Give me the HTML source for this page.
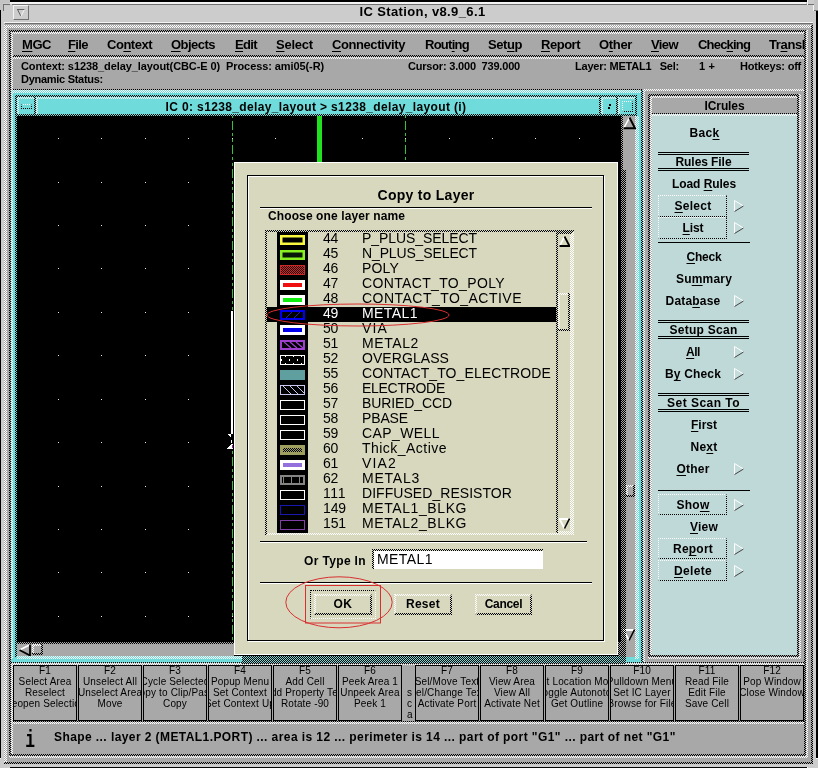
<!DOCTYPE html>
<html><head><meta charset="utf-8"><title>IC Station, v8.9_6.1</title><style>
html,body{margin:0;padding:0;background:#a8a8a8;}
#r{will-change:transform;position:relative;width:818px;height:768px;overflow:hidden;font-family:"Liberation Sans",sans-serif;}
#r>div,#r>span,#r>svg{position:absolute;}
.t{white-space:pre;display:block;}
.t u{text-decoration:underline;text-decoration-thickness:1px;text-underline-offset:2px;text-decoration-skip-ink:none;}
.dk{background:repeating-conic-gradient(#000 0 25%,transparent 0 50%) 0 0/2px 2px;}

.dk1{background:repeating-linear-gradient(90deg,#000 0 1px,transparent 1px 2px);}
.lt{background:repeating-conic-gradient(#fff 0 25%,transparent 0 50%) 0 0/2px 2px;}
.key{background:#a8a8a8;letter-spacing:0.15px;font-size:10px;line-height:11px;text-align:center;white-space:nowrap;}
.key div{display:flex;justify-content:center;}
.fk{margin-top:-1px;height:11px;}
.fl{height:11px;}
</style></head><body><div id="r">
<div style="left:0px;top:0px;width:818px;height:768px;background:#cccccc;"></div>
<div style="left:10px;top:0px;width:798px;height:2px;background:#000;"></div>
<div style="left:0px;top:10px;width:1px;height:748px;background:#000;"></div>
<div style="left:816px;top:10px;width:2px;height:748px;background:#000;"></div>
<div style="left:10px;top:767px;width:798px;height:1px;background:#000;"></div>
<div style="left:10px;top:2px;width:796px;height:2px;background:#f4f4f4;"></div>
<div style="left:12px;top:4px;width:795px;height:1px;background:#707070;"></div>
<div style="left:3px;top:4px;width:7px;height:1px;background:#707070;"></div>
<div style="left:3px;top:4px;width:1px;height:7px;background:#707070;"></div>
<div style="left:807px;top:0px;width:1px;height:5px;background:#f4f4f4;"></div>
<div style="left:808px;top:4px;width:6px;height:1px;background:#707070;"></div>
<div style="left:813px;top:5px;width:1px;height:6px;background:#f4f4f4;"></div>
<div style="left:814px;top:10px;width:4px;height:1px;background:#707070;"></div>
<div style="left:814px;top:0px;width:4px;height:10px;background:#c4c4c4;"></div>
<div style="left:0px;top:0px;width:3px;height:10px;background:#c4c4c4;"></div>
<div style="left:0px;top:0px;width:10px;height:3px;background:#c4c4c4;"></div>
<div style="left:814px;top:758px;width:4px;height:1px;background:#f4f4f4;"></div>
<div style="left:807px;top:764px;width:1px;height:4px;background:#f4f4f4;"></div>
<div style="left:0px;top:758px;width:4px;height:1px;background:#f4f4f4;"></div>
<div style="left:3px;top:758px;width:1px;height:6px;background:#707070;"></div>
<div style="left:3px;top:763px;width:7px;height:1px;background:#707070;"></div>
<div style="left:813px;top:758px;width:1px;height:6px;background:#707070;"></div>
<div style="left:808px;top:763px;width:6px;height:1px;background:#707070;"></div>
<div style="left:13px;top:5px;width:16px;height:15px;border:1px solid;border-color:#f4f4f4 #707070 #707070 #f4f4f4;box-sizing:border-box;"></div>
<svg class="a" style="left:17px;top:9px" width="8" height="8" viewBox="0 0 8 8"><path d="M0 0.5H7.5M0.5 0.5L3.8 7" stroke="#606060" fill="none"/><path d="M7.3 0.8L4 7.2" stroke="#f4f4f4"/></svg>
<span class="t" style="left:422.5px;top:5.00px;font-size:13px;line-height:13px;font-weight:bold;color:#000;letter-spacing:0.38px;transform:translateX(-50%);">IC Station, v8.9_6.1</span>
<div style="left:4px;top:22px;width:809px;height:1px;background:#f4f4f4;"></div>
<div style="left:5px;top:23px;width:808px;height:1px;background:#707070;"></div>
<div style="left:4px;top:24px;width:809px;height:740px;background:#a8a8a8;"></div>
<div class="lt" style="left:4px;top:25px;width:808px;height:3px;background-position:0px -1px;"></div>
<div class="lt" style="left:4px;top:25px;width:3px;height:737px;background-position:0px -1px;"></div>
<div class="dk" style="left:811px;top:25px;width:2px;height:739px;background-position:-1px -1px;"></div>
<div class="dk" style="left:4px;top:762px;width:809px;height:2px;background-position:0px 0px;"></div>
<div style="left:813px;top:11px;width:3px;height:756px;background:#cccccc;"></div>
<div style="left:1px;top:764px;width:815px;height:3px;background:#cccccc;"></div>
<div style="left:1px;top:11px;width:3px;height:756px;background:#cccccc;"></div>
<div class="dk" style="left:9px;top:30px;width:797px;height:2px;background-position:-1px 0px;"></div>
<div class="dk" style="left:9px;top:30px;width:2px;height:726px;background-position:-1px 0px;"></div>
<div class="lt" style="left:11px;top:32px;width:793px;height:2px;background-position:-1px 0px;"></div>
<div class="lt" style="left:11px;top:32px;width:2px;height:722px;background-position:-1px 0px;"></div>
<div class="dk" style="left:804px;top:32px;width:2px;height:724px;background-position:0px 0px;"></div>
<div class="lt" style="left:806px;top:30px;width:2px;height:728px;background-position:0px 0px;"></div>
<div class="dk" style="left:11px;top:754px;width:795px;height:2px;background-position:-1px 0px;"></div>
<div class="lt" style="left:9px;top:756px;width:799px;height:2px;background-position:-1px 0px;"></div>
<div class="dk" style="left:13px;top:55px;width:791px;height:2px;background-position:-1px -1px;"></div>
<div class="lt" style="left:13px;top:57px;width:791px;height:2px;background-position:-1px -1px;"></div>
<span class="t" style="left:22px;top:38.00px;font-size:13px;line-height:13px;font-weight:bold;color:#000;letter-spacing:-0.45px;"><u>M</u>GC</span>
<span class="t" style="left:68px;top:38.00px;font-size:13px;line-height:13px;font-weight:bold;color:#000;letter-spacing:-0.6px;"><u>F</u>ile</span>
<span class="t" style="left:107px;top:38.00px;font-size:13px;line-height:13px;font-weight:bold;color:#000;letter-spacing:-0.48px;">Co<u>n</u>text</span>
<span class="t" style="left:171px;top:38.00px;font-size:13px;line-height:13px;font-weight:bold;color:#000;letter-spacing:-0.53px;"><u>O</u>bjects</span>
<span class="t" style="left:235px;top:38.00px;font-size:13px;line-height:13px;font-weight:bold;color:#000;letter-spacing:-0.64px;"><u>E</u>dit</span>
<span class="t" style="left:276px;top:38.00px;font-size:13px;line-height:13px;font-weight:bold;color:#000;letter-spacing:-0.22px;"><u>S</u>elect</span>
<span class="t" style="left:332px;top:38.00px;font-size:13px;line-height:13px;font-weight:bold;color:#000;letter-spacing:-0.42px;"><u>C</u>onnectivity</span>
<span class="t" style="left:425px;top:38.00px;font-size:13px;line-height:13px;font-weight:bold;color:#000;letter-spacing:-0.73px;">Rout<u>i</u>ng</span>
<span class="t" style="left:488px;top:38.00px;font-size:13px;line-height:13px;font-weight:bold;color:#000;letter-spacing:-0.42px;">Set<u>u</u>p</span>
<span class="t" style="left:541px;top:38.00px;font-size:13px;line-height:13px;font-weight:bold;color:#000;letter-spacing:-0.48px;"><u>R</u>eport</span>
<span class="t" style="left:599px;top:38.00px;font-size:13px;line-height:13px;font-weight:bold;color:#000;letter-spacing:-0.33px;">O<u>t</u>her</span>
<span class="t" style="left:651px;top:38.00px;font-size:13px;line-height:13px;font-weight:bold;color:#000;letter-spacing:-0.6px;"><u>V</u>iew</span>
<span class="t" style="left:698px;top:38.00px;font-size:13px;line-height:13px;font-weight:bold;color:#000;letter-spacing:-0.81px;">Chec<u>k</u>ing</span>
<span class="t" style="left:769px;top:38.00px;font-size:13px;line-height:13px;font-weight:bold;color:#000;letter-spacing:-0.38px;">Tr<u>a</u>nsl</span>
<div class="dk" style="left:804px;top:32px;width:2px;height:724px;background-position:0px 0px;"></div>
<span class="t" style="left:21px;top:60.69px;font-size:11px;line-height:11px;font-weight:bold;color:#000;letter-spacing:-0.09px;">Context: s1238_delay_layout(CBC-E 0)  Process: ami05(-R)</span>
<span class="t" style="left:408px;top:60.69px;font-size:11px;line-height:11px;font-weight:bold;color:#000;letter-spacing:-0.19px;">Cursor: 3.000  739.000</span>
<span class="t" style="left:575px;top:60.69px;font-size:11px;line-height:11px;font-weight:bold;color:#000;letter-spacing:-0.23px;">Layer: METAL1   Sel:</span>
<span class="t" style="left:699px;top:60.69px;font-size:11px;line-height:11px;font-weight:bold;color:#000;letter-spacing:0.13px;">1 +</span>
<span class="t" style="left:740px;top:60.69px;font-size:11px;line-height:11px;font-weight:bold;color:#000;letter-spacing:-0.21px;">Hotkeys: off</span>
<span class="t" style="left:21px;top:73.69px;font-size:11px;line-height:11px;font-weight:bold;color:#000;letter-spacing:-0.28px;">Dynamic Status:</span>
<div class="dk1" style="left:13px;top:89px;width:630px;height:1px;"></div>
<div style="left:11px;top:90px;width:632px;height:573px;background:#70dbdb;"></div>
<div class="lt" style="left:11px;top:90px;width:630px;height:3px;background-position:-1px 0px;"></div>
<div class="lt" style="left:11px;top:90px;width:2px;height:569px;background-position:-1px 0px;"></div>
<div class="dk" style="left:641px;top:90px;width:2px;height:573px;background-position:-1px 0px;"></div>
<div class="dk" style="left:15px;top:95px;width:622px;height:2px;background-position:-1px -1px;"></div>
<div class="dk" style="left:15px;top:95px;width:2px;height:562px;background-position:-1px -1px;"></div>
<div class="lt" style="left:17px;top:97px;width:618px;height:2px;background-position:-1px -1px;"></div>
<div class="lt" style="left:17px;top:97px;width:2px;height:17px;background-position:-1px -1px;"></div>
<div class="dk" style="left:635px;top:97px;width:2px;height:19px;background-position:-1px -1px;"></div>
<div style="left:17px;top:116px;width:604px;height:526px;background:#000;"></div>
<div class="dk" style="left:17px;top:114px;width:620px;height:2px;background-position:-1px 0px;"></div>
<div class="dk" style="left:34px;top:97px;width:2px;height:17px;background-position:0px -1px;"></div>
<div class="lt" style="left:36px;top:99px;width:2px;height:15px;background-position:0px -1px;"></div>
<div style="left:21px;top:104px;width:11px;height:5px;border:1px dotted #000;border-top:1px dotted #fff;box-sizing:border-box;"></div>
<span class="t" style="left:316px;top:100.84px;font-size:12px;line-height:12px;font-weight:bold;color:#000;letter-spacing:0.36px;transform:translateX(-50%);">IC 0: s1238_delay_layout &gt; s1238_delay_layout (i)</span>
<div class="dk" style="left:599px;top:97px;width:2px;height:17px;background-position:-1px -1px;"></div>
<div class="lt" style="left:601px;top:99px;width:2px;height:15px;background-position:-1px -1px;"></div>
<div class="dk" style="left:616px;top:97px;width:2px;height:17px;background-position:0px -1px;"></div>
<div class="lt" style="left:618px;top:99px;width:2px;height:15px;background-position:0px -1px;"></div>
<div style="left:622px;top:101px;width:11px;height:11px;border:1px dotted #fff;border-bottom:1px dotted #000;border-right:1px dotted #000;box-sizing:border-box;"></div>
<div style="left:609px;top:104px;width:2px;height:2px;background:#000;"></div>
<div style="left:608px;top:107px;width:2px;height:2px;background:#000;"></div>
<svg class="a" style="left:17px;top:116px" width="604" height="526"><rect x="41" y="22" width="1" height="1" fill="#e8e8e8"/><rect x="41" y="66" width="1" height="1" fill="#e8e8e8"/><rect x="41" y="109" width="1" height="1" fill="#e8e8e8"/><rect x="41" y="152" width="1" height="1" fill="#e8e8e8"/><rect x="41" y="196" width="1" height="1" fill="#e8e8e8"/><rect x="41" y="239" width="1" height="1" fill="#e8e8e8"/><rect x="41" y="283" width="1" height="1" fill="#e8e8e8"/><rect x="41" y="326" width="1" height="1" fill="#e8e8e8"/><rect x="41" y="370" width="1" height="1" fill="#e8e8e8"/><rect x="41" y="413" width="1" height="1" fill="#e8e8e8"/><rect x="41" y="456" width="1" height="1" fill="#e8e8e8"/><rect x="41" y="500" width="1" height="1" fill="#e8e8e8"/><rect x="84" y="22" width="1" height="1" fill="#e8e8e8"/><rect x="84" y="66" width="1" height="1" fill="#e8e8e8"/><rect x="84" y="109" width="1" height="1" fill="#e8e8e8"/><rect x="84" y="152" width="1" height="1" fill="#e8e8e8"/><rect x="84" y="196" width="1" height="1" fill="#e8e8e8"/><rect x="84" y="239" width="1" height="1" fill="#e8e8e8"/><rect x="84" y="283" width="1" height="1" fill="#e8e8e8"/><rect x="84" y="326" width="1" height="1" fill="#e8e8e8"/><rect x="84" y="370" width="1" height="1" fill="#e8e8e8"/><rect x="84" y="413" width="1" height="1" fill="#e8e8e8"/><rect x="84" y="456" width="1" height="1" fill="#e8e8e8"/><rect x="84" y="500" width="1" height="1" fill="#e8e8e8"/><rect x="128" y="22" width="1" height="1" fill="#e8e8e8"/><rect x="128" y="66" width="1" height="1" fill="#e8e8e8"/><rect x="128" y="109" width="1" height="1" fill="#e8e8e8"/><rect x="128" y="152" width="1" height="1" fill="#e8e8e8"/><rect x="128" y="196" width="1" height="1" fill="#e8e8e8"/><rect x="128" y="239" width="1" height="1" fill="#e8e8e8"/><rect x="128" y="283" width="1" height="1" fill="#e8e8e8"/><rect x="128" y="326" width="1" height="1" fill="#e8e8e8"/><rect x="128" y="370" width="1" height="1" fill="#e8e8e8"/><rect x="128" y="413" width="1" height="1" fill="#e8e8e8"/><rect x="128" y="456" width="1" height="1" fill="#e8e8e8"/><rect x="128" y="500" width="1" height="1" fill="#e8e8e8"/><rect x="171" y="22" width="1" height="1" fill="#e8e8e8"/><rect x="171" y="66" width="1" height="1" fill="#e8e8e8"/><rect x="171" y="109" width="1" height="1" fill="#e8e8e8"/><rect x="171" y="152" width="1" height="1" fill="#e8e8e8"/><rect x="171" y="196" width="1" height="1" fill="#e8e8e8"/><rect x="171" y="239" width="1" height="1" fill="#e8e8e8"/><rect x="171" y="283" width="1" height="1" fill="#e8e8e8"/><rect x="171" y="326" width="1" height="1" fill="#e8e8e8"/><rect x="171" y="370" width="1" height="1" fill="#e8e8e8"/><rect x="171" y="413" width="1" height="1" fill="#e8e8e8"/><rect x="171" y="456" width="1" height="1" fill="#e8e8e8"/><rect x="171" y="500" width="1" height="1" fill="#e8e8e8"/><rect x="215" y="22" width="1" height="1" fill="#e8e8e8"/><rect x="215" y="66" width="1" height="1" fill="#e8e8e8"/><rect x="215" y="109" width="1" height="1" fill="#e8e8e8"/><rect x="215" y="152" width="1" height="1" fill="#e8e8e8"/><rect x="215" y="196" width="1" height="1" fill="#e8e8e8"/><rect x="215" y="239" width="1" height="1" fill="#e8e8e8"/><rect x="215" y="283" width="1" height="1" fill="#e8e8e8"/><rect x="215" y="326" width="1" height="1" fill="#e8e8e8"/><rect x="215" y="370" width="1" height="1" fill="#e8e8e8"/><rect x="215" y="413" width="1" height="1" fill="#e8e8e8"/><rect x="215" y="456" width="1" height="1" fill="#e8e8e8"/><rect x="215" y="500" width="1" height="1" fill="#e8e8e8"/><rect x="258" y="22" width="1" height="1" fill="#e8e8e8"/><rect x="258" y="66" width="1" height="1" fill="#e8e8e8"/><rect x="258" y="109" width="1" height="1" fill="#e8e8e8"/><rect x="258" y="152" width="1" height="1" fill="#e8e8e8"/><rect x="258" y="196" width="1" height="1" fill="#e8e8e8"/><rect x="258" y="239" width="1" height="1" fill="#e8e8e8"/><rect x="258" y="283" width="1" height="1" fill="#e8e8e8"/><rect x="258" y="326" width="1" height="1" fill="#e8e8e8"/><rect x="258" y="370" width="1" height="1" fill="#e8e8e8"/><rect x="258" y="413" width="1" height="1" fill="#e8e8e8"/><rect x="258" y="456" width="1" height="1" fill="#e8e8e8"/><rect x="258" y="500" width="1" height="1" fill="#e8e8e8"/><rect x="301" y="22" width="1" height="1" fill="#e8e8e8"/><rect x="301" y="66" width="1" height="1" fill="#e8e8e8"/><rect x="301" y="109" width="1" height="1" fill="#e8e8e8"/><rect x="301" y="152" width="1" height="1" fill="#e8e8e8"/><rect x="301" y="196" width="1" height="1" fill="#e8e8e8"/><rect x="301" y="239" width="1" height="1" fill="#e8e8e8"/><rect x="301" y="283" width="1" height="1" fill="#e8e8e8"/><rect x="301" y="326" width="1" height="1" fill="#e8e8e8"/><rect x="301" y="370" width="1" height="1" fill="#e8e8e8"/><rect x="301" y="413" width="1" height="1" fill="#e8e8e8"/><rect x="301" y="456" width="1" height="1" fill="#e8e8e8"/><rect x="301" y="500" width="1" height="1" fill="#e8e8e8"/><rect x="345" y="22" width="1" height="1" fill="#e8e8e8"/><rect x="345" y="66" width="1" height="1" fill="#e8e8e8"/><rect x="345" y="109" width="1" height="1" fill="#e8e8e8"/><rect x="345" y="152" width="1" height="1" fill="#e8e8e8"/><rect x="345" y="196" width="1" height="1" fill="#e8e8e8"/><rect x="345" y="239" width="1" height="1" fill="#e8e8e8"/><rect x="345" y="283" width="1" height="1" fill="#e8e8e8"/><rect x="345" y="326" width="1" height="1" fill="#e8e8e8"/><rect x="345" y="370" width="1" height="1" fill="#e8e8e8"/><rect x="345" y="413" width="1" height="1" fill="#e8e8e8"/><rect x="345" y="456" width="1" height="1" fill="#e8e8e8"/><rect x="345" y="500" width="1" height="1" fill="#e8e8e8"/><rect x="388" y="22" width="1" height="1" fill="#e8e8e8"/><rect x="388" y="66" width="1" height="1" fill="#e8e8e8"/><rect x="388" y="109" width="1" height="1" fill="#e8e8e8"/><rect x="388" y="152" width="1" height="1" fill="#e8e8e8"/><rect x="388" y="196" width="1" height="1" fill="#e8e8e8"/><rect x="388" y="239" width="1" height="1" fill="#e8e8e8"/><rect x="388" y="283" width="1" height="1" fill="#e8e8e8"/><rect x="388" y="326" width="1" height="1" fill="#e8e8e8"/><rect x="388" y="370" width="1" height="1" fill="#e8e8e8"/><rect x="388" y="413" width="1" height="1" fill="#e8e8e8"/><rect x="388" y="456" width="1" height="1" fill="#e8e8e8"/><rect x="388" y="500" width="1" height="1" fill="#e8e8e8"/><rect x="432" y="22" width="1" height="1" fill="#e8e8e8"/><rect x="432" y="66" width="1" height="1" fill="#e8e8e8"/><rect x="432" y="109" width="1" height="1" fill="#e8e8e8"/><rect x="432" y="152" width="1" height="1" fill="#e8e8e8"/><rect x="432" y="196" width="1" height="1" fill="#e8e8e8"/><rect x="432" y="239" width="1" height="1" fill="#e8e8e8"/><rect x="432" y="283" width="1" height="1" fill="#e8e8e8"/><rect x="432" y="326" width="1" height="1" fill="#e8e8e8"/><rect x="432" y="370" width="1" height="1" fill="#e8e8e8"/><rect x="432" y="413" width="1" height="1" fill="#e8e8e8"/><rect x="432" y="456" width="1" height="1" fill="#e8e8e8"/><rect x="432" y="500" width="1" height="1" fill="#e8e8e8"/><rect x="475" y="22" width="1" height="1" fill="#e8e8e8"/><rect x="475" y="66" width="1" height="1" fill="#e8e8e8"/><rect x="475" y="109" width="1" height="1" fill="#e8e8e8"/><rect x="475" y="152" width="1" height="1" fill="#e8e8e8"/><rect x="475" y="196" width="1" height="1" fill="#e8e8e8"/><rect x="475" y="239" width="1" height="1" fill="#e8e8e8"/><rect x="475" y="283" width="1" height="1" fill="#e8e8e8"/><rect x="475" y="326" width="1" height="1" fill="#e8e8e8"/><rect x="475" y="370" width="1" height="1" fill="#e8e8e8"/><rect x="475" y="413" width="1" height="1" fill="#e8e8e8"/><rect x="475" y="456" width="1" height="1" fill="#e8e8e8"/><rect x="475" y="500" width="1" height="1" fill="#e8e8e8"/><rect x="518" y="22" width="1" height="1" fill="#e8e8e8"/><rect x="518" y="66" width="1" height="1" fill="#e8e8e8"/><rect x="518" y="109" width="1" height="1" fill="#e8e8e8"/><rect x="518" y="152" width="1" height="1" fill="#e8e8e8"/><rect x="518" y="196" width="1" height="1" fill="#e8e8e8"/><rect x="518" y="239" width="1" height="1" fill="#e8e8e8"/><rect x="518" y="283" width="1" height="1" fill="#e8e8e8"/><rect x="518" y="326" width="1" height="1" fill="#e8e8e8"/><rect x="518" y="370" width="1" height="1" fill="#e8e8e8"/><rect x="518" y="413" width="1" height="1" fill="#e8e8e8"/><rect x="518" y="456" width="1" height="1" fill="#e8e8e8"/><rect x="518" y="500" width="1" height="1" fill="#e8e8e8"/><rect x="562" y="22" width="1" height="1" fill="#e8e8e8"/><rect x="562" y="66" width="1" height="1" fill="#e8e8e8"/><rect x="562" y="109" width="1" height="1" fill="#e8e8e8"/><rect x="562" y="152" width="1" height="1" fill="#e8e8e8"/><rect x="562" y="196" width="1" height="1" fill="#e8e8e8"/><rect x="562" y="239" width="1" height="1" fill="#e8e8e8"/><rect x="562" y="283" width="1" height="1" fill="#e8e8e8"/><rect x="562" y="326" width="1" height="1" fill="#e8e8e8"/><rect x="562" y="370" width="1" height="1" fill="#e8e8e8"/><rect x="562" y="413" width="1" height="1" fill="#e8e8e8"/><rect x="562" y="456" width="1" height="1" fill="#e8e8e8"/><rect x="562" y="500" width="1" height="1" fill="#e8e8e8"/><line x1="215.5" y1="0" x2="215.5" y2="526" stroke="#38c038" stroke-width="1" stroke-dasharray="9 3 3 3 3 3" stroke-dashoffset="19"/><line x1="388.5" y1="0" x2="388.5" y2="46" stroke="#38c038" stroke-width="1" stroke-dasharray="9 3 3 3 3 3" stroke-dashoffset="19"/><rect x="300" y="0" width="5" height="46" fill="#20e020"/></svg>
<div style="left:621px;top:116px;width:15px;height:541px;background:#a8a8a8;"></div>
<div class="dk" style="left:621px;top:116px;width:2px;height:541px;background-position:-1px 0px;"></div>
<div class="lt" style="left:635px;top:116px;width:4px;height:543px;background-position:-1px 0px;"></div>
<svg class="a" style="left:623px;top:117px" width="13" height="13" viewBox="0 0 13 13"><path d="M6.5 0.5L0.7 11.5" stroke="#fff" stroke-width="1.6"/><path d="M6.5 0.5L12 11.2H0.5" stroke="#000" stroke-width="1.9" fill="none"/></svg>
<svg class="a" style="left:623px;top:629px" width="12" height="12" viewBox="0 0 12 12"><path d="M11.5 1H0.5L6 11.5" stroke="#fff" stroke-width="1.8" fill="none"/><path d="M11.5 0.5L6 11.5" stroke="#000" stroke-width="1.6"/></svg>
<div class="lt" style="left:626px;top:485px;width:9px;height:2px;background-position:0px -1px;"></div>
<div class="lt" style="left:626px;top:485px;width:2px;height:12px;background-position:0px -1px;"></div>
<div class="dk" style="left:633px;top:485px;width:2px;height:12px;background-position:-1px -1px;"></div>
<div class="dk" style="left:626px;top:495px;width:9px;height:2px;background-position:0px -1px;"></div>
<div style="left:17px;top:642px;width:604px;height:14px;background:#a8a8a8;"></div>
<div class="dk" style="left:17px;top:642px;width:606px;height:2px;background-position:-1px 0px;"></div>
<div class="lt" style="left:17px;top:656px;width:225px;height:3px;background-position:-1px 0px;"></div>
<svg class="a" style="left:19px;top:644px" width="12" height="12" viewBox="0 0 12 12"><path d="M11.5 0.5L0.5 6" stroke="#fff" stroke-width="1.6"/><path d="M0.5 6L11 11.5V0.5" stroke="#000" stroke-width="1.8" fill="none"/></svg>
<div class="lt" style="left:32px;top:644px;width:11px;height:2px;background-position:0px 0px;"></div>
<div class="lt" style="left:32px;top:644px;width:2px;height:11px;background-position:0px 0px;"></div>
<div class="dk" style="left:41px;top:644px;width:2px;height:11px;background-position:-1px 0px;"></div>
<div class="dk" style="left:32px;top:653px;width:11px;height:2px;background-position:0px -1px;"></div>
<div style="left:232px;top:434px;width:1px;height:17px;background:#000;"></div>
<div style="left:231px;top:311px;width:2px;height:123px;background:#fff;"></div>
<svg class="a" style="left:226px;top:434px" width="8" height="16" viewBox="0 0 8 16" shape-rendering="crispEdges"><path d="M1 0H5V3H4V2H3V1H2Z" fill="#fff"/><rect x="5" y="6" width="1" height="3" fill="#fff"/><path d="M5 10H7V15H1V14H2V13H3V12H4V11H5Z" fill="#fff"/><rect x="6" y="11" width="1" height="3" fill="#a020a0"/></svg>
<div class="dk1" style="left:11px;top:662px;width:793px;height:1px;"></div>
<div class="lt" style="left:11px;top:663px;width:793px;height:2px;background-position:-1px -1px;"></div>
<div class="lt" style="left:643px;top:89px;width:161px;height:2px;background-position:-1px -1px;"></div>
<div class="lt" style="left:643px;top:89px;width:2px;height:573px;background-position:-1px -1px;"></div>
<div class="dk" style="left:648px;top:94px;width:151px;height:2px;background-position:0px 0px;"></div>
<div class="dk" style="left:648px;top:94px;width:2px;height:563px;background-position:0px 0px;"></div>
<div class="lt" style="left:650px;top:96px;width:147px;height:2px;background-position:0px 0px;"></div>
<div class="lt" style="left:650px;top:96px;width:2px;height:559px;background-position:0px 0px;"></div>
<div style="left:652px;top:98px;width:145px;height:15px;background:#a8a8a8;"></div>
<div style="left:652px;top:116px;width:145px;height:539px;background:#bfd8d8;"></div>
<div class="dk1" style="left:652px;top:113px;width:145px;height:1px;"></div>
<div style="left:652px;top:114px;width:145px;height:2px;background:#bfd8d8;"></div>
<div class="lt" style="left:652px;top:114px;width:145px;height:2px;background-position:0px 0px;"></div>
<div class="dk" style="left:797px;top:96px;width:2px;height:561px;background-position:-1px 0px;"></div>
<div class="lt" style="left:799px;top:94px;width:2px;height:565px;background-position:-1px 0px;"></div>
<div class="dk" style="left:650px;top:655px;width:147px;height:2px;background-position:0px -1px;"></div>
<div class="lt" style="left:648px;top:657px;width:151px;height:2px;background-position:0px -1px;"></div>
<span class="t" style="left:724.5px;top:99.84px;font-size:12px;line-height:12px;font-weight:bold;color:#000;letter-spacing:-0.1px;transform:translateX(-50%);">ICrules</span>
<span class="t" style="left:704.5px;top:126.84px;font-size:12px;line-height:12px;font-weight:bold;color:#000;letter-spacing:0.33px;transform:translateX(-50%);">Bac<u>k</u></span>
<div style="left:658px;top:152px;width:91px;height:1px;background:#000;"></div>
<div style="left:658px;top:154px;width:91px;height:1px;background:#000;"></div>
<span class="t" style="left:703.5px;top:155.84px;font-size:12px;line-height:12px;font-weight:bold;color:#000;letter-spacing:-0.07px;transform:translateX(-50%);">Rules File</span>
<div style="left:658px;top:168px;width:91px;height:1px;background:#000;"></div>
<div style="left:658px;top:170px;width:91px;height:1px;background:#000;"></div>
<span class="t" style="left:704px;top:177.84px;font-size:12px;line-height:12px;font-weight:bold;color:#000;letter-spacing:-0.07px;transform:translateX(-50%);">Load <u>R</u>ules</span>
<div style="left:658px;top:195px;width:69px;height:22px;border:1px dotted #fff;border-right:1px dotted #000;border-bottom:1px dotted #000;box-sizing:border-box;"></div>
<span class="t" style="left:693px;top:199.84px;font-size:12px;line-height:12px;font-weight:bold;color:#000;letter-spacing:0.27px;transform:translateX(-50%);"><u>S</u>elect</span>
<svg class="a" style="left:734px;top:200px" width="11" height="12" viewBox="0 0 11 12"><path d="M0.5 0.5L9.5 6L0.5 11.5Z" fill="#c4dcdc"/><path d="M0.5 11.5V0.5L9.5 6" stroke="#fff" fill="none"/><path d="M9.5 6L0.5 11.5" stroke="#404040" fill="none"/></svg>
<div style="left:658px;top:217px;width:69px;height:22px;border:1px dotted #fff;border-right:1px dotted #000;border-bottom:1px dotted #000;box-sizing:border-box;"></div>
<span class="t" style="left:693px;top:221.84px;font-size:12px;line-height:12px;font-weight:bold;color:#000;letter-spacing:-0.09px;transform:translateX(-50%);"><u>L</u>ist</span>
<svg class="a" style="left:734px;top:222px" width="11" height="12" viewBox="0 0 11 12"><path d="M0.5 0.5L9.5 6L0.5 11.5Z" fill="#c4dcdc"/><path d="M0.5 11.5V0.5L9.5 6" stroke="#fff" fill="none"/><path d="M9.5 6L0.5 11.5" stroke="#404040" fill="none"/></svg>
<div style="left:658px;top:242px;width:92px;height:1px;background:#000;"></div>
<span class="t" style="left:704px;top:250.84px;font-size:12px;line-height:12px;font-weight:bold;color:#000;letter-spacing:-0.21px;transform:translateX(-50%);"><u>C</u>heck</span>
<span class="t" style="left:704px;top:272.84px;font-size:12px;line-height:12px;font-weight:bold;color:#000;letter-spacing:0.19px;transform:translateX(-50%);">Su<u>m</u>mary</span>
<span class="t" style="left:693px;top:294.84px;font-size:12px;line-height:12px;font-weight:bold;color:#000;letter-spacing:0.2px;transform:translateX(-50%);">Data<u>b</u>ase</span>
<svg class="a" style="left:734px;top:295px" width="11" height="12" viewBox="0 0 11 12"><path d="M0.5 0.5L9.5 6L0.5 11.5Z" fill="#c4dcdc"/><path d="M0.5 11.5V0.5L9.5 6" stroke="#fff" fill="none"/><path d="M9.5 6L0.5 11.5" stroke="#404040" fill="none"/></svg>
<div style="left:658px;top:320px;width:91px;height:1px;background:#000;"></div>
<div style="left:658px;top:322px;width:91px;height:1px;background:#000;"></div>
<span class="t" style="left:703.5px;top:323.84px;font-size:12px;line-height:12px;font-weight:bold;color:#000;letter-spacing:0.26px;transform:translateX(-50%);">Setup Scan</span>
<div style="left:658px;top:336px;width:91px;height:1px;background:#000;"></div>
<div style="left:658px;top:338px;width:91px;height:1px;background:#000;"></div>
<span class="t" style="left:693px;top:345.84px;font-size:12px;line-height:12px;font-weight:bold;color:#000;letter-spacing:-0.45px;transform:translateX(-50%);"><u>A</u>ll</span>
<svg class="a" style="left:734px;top:346px" width="11" height="12" viewBox="0 0 11 12"><path d="M0.5 0.5L9.5 6L0.5 11.5Z" fill="#c4dcdc"/><path d="M0.5 11.5V0.5L9.5 6" stroke="#fff" fill="none"/><path d="M9.5 6L0.5 11.5" stroke="#404040" fill="none"/></svg>
<span class="t" style="left:693px;top:367.84px;font-size:12px;line-height:12px;font-weight:bold;color:#000;letter-spacing:0.16px;transform:translateX(-50%);">B<u>y</u> Check</span>
<svg class="a" style="left:734px;top:368px" width="11" height="12" viewBox="0 0 11 12"><path d="M0.5 0.5L9.5 6L0.5 11.5Z" fill="#c4dcdc"/><path d="M0.5 11.5V0.5L9.5 6" stroke="#fff" fill="none"/><path d="M9.5 6L0.5 11.5" stroke="#404040" fill="none"/></svg>
<div style="left:658px;top:393px;width:91px;height:1px;background:#000;"></div>
<div style="left:658px;top:395px;width:91px;height:1px;background:#000;"></div>
<span class="t" style="left:703.5px;top:396.84px;font-size:12px;line-height:12px;font-weight:bold;color:#000;letter-spacing:0.47px;transform:translateX(-50%);">Set Scan To</span>
<div style="left:658px;top:409px;width:91px;height:1px;background:#000;"></div>
<div style="left:658px;top:411px;width:91px;height:1px;background:#000;"></div>
<span class="t" style="left:704px;top:418.84px;font-size:12px;line-height:12px;font-weight:bold;color:#000;transform:translateX(-50%);"><u>F</u>irst</span>
<span class="t" style="left:704px;top:440.84px;font-size:12px;line-height:12px;font-weight:bold;color:#000;letter-spacing:0.25px;transform:translateX(-50%);">Ne<u>x</u>t</span>
<span class="t" style="left:693px;top:462.84px;font-size:12px;line-height:12px;font-weight:bold;color:#000;letter-spacing:0.2px;transform:translateX(-50%);"><u>O</u>ther</span>
<svg class="a" style="left:734px;top:463px" width="11" height="12" viewBox="0 0 11 12"><path d="M0.5 0.5L9.5 6L0.5 11.5Z" fill="#c4dcdc"/><path d="M0.5 11.5V0.5L9.5 6" stroke="#fff" fill="none"/><path d="M9.5 6L0.5 11.5" stroke="#404040" fill="none"/></svg>
<div style="left:658px;top:490px;width:92px;height:1px;background:#000;"></div>
<div style="left:658px;top:494px;width:69px;height:21px;border:1px dotted #fff;border-right:1px dotted #000;border-bottom:1px dotted #000;box-sizing:border-box;"></div>
<span class="t" style="left:693px;top:498.84px;font-size:12px;line-height:12px;font-weight:bold;color:#000;letter-spacing:0.25px;transform:translateX(-50%);">Sho<u>w</u></span>
<svg class="a" style="left:734px;top:499px" width="11" height="12" viewBox="0 0 11 12"><path d="M0.5 0.5L9.5 6L0.5 11.5Z" fill="#c4dcdc"/><path d="M0.5 11.5V0.5L9.5 6" stroke="#fff" fill="none"/><path d="M9.5 6L0.5 11.5" stroke="#404040" fill="none"/></svg>
<span class="t" style="left:704px;top:520.84px;font-size:12px;line-height:12px;font-weight:bold;color:#000;letter-spacing:0.21px;transform:translateX(-50%);"><u>V</u>iew</span>
<div style="left:658px;top:538px;width:69px;height:21px;border:1px dotted #fff;border-right:1px dotted #000;border-bottom:1px dotted #000;box-sizing:border-box;"></div>
<span class="t" style="left:693px;top:542.84px;font-size:12px;line-height:12px;font-weight:bold;color:#000;letter-spacing:0.22px;transform:translateX(-50%);">Re<u>p</u>ort</span>
<svg class="a" style="left:734px;top:543px" width="11" height="12" viewBox="0 0 11 12"><path d="M0.5 0.5L9.5 6L0.5 11.5Z" fill="#c4dcdc"/><path d="M0.5 11.5V0.5L9.5 6" stroke="#fff" fill="none"/><path d="M9.5 6L0.5 11.5" stroke="#404040" fill="none"/></svg>
<div style="left:658px;top:560px;width:69px;height:21px;border:1px dotted #fff;border-right:1px dotted #000;border-bottom:1px dotted #000;box-sizing:border-box;"></div>
<span class="t" style="left:693px;top:564.84px;font-size:12px;line-height:12px;font-weight:bold;color:#000;letter-spacing:0.33px;transform:translateX(-50%);"><u>D</u>elete</span>
<svg class="a" style="left:734px;top:565px" width="11" height="12" viewBox="0 0 11 12"><path d="M0.5 0.5L9.5 6L0.5 11.5Z" fill="#c4dcdc"/><path d="M0.5 11.5V0.5L9.5 6" stroke="#fff" fill="none"/><path d="M9.5 6L0.5 11.5" stroke="#404040" fill="none"/></svg>
<div class="key" style="left:13px;top:665px;width:64px;height:56px;border:1px solid #000;box-sizing:border-box;overflow:hidden;"><div class="fk">F1</div><div class="fl">Select Area</div><div class="fl">Reselect</div><div class="fl">Reopen Selection</div></div>
<div class="key" style="left:78px;top:665px;width:64px;height:56px;border:1px solid #000;box-sizing:border-box;overflow:hidden;"><div class="fk">F2</div><div class="fl">Unselect All</div><div class="fl">Unselect Area</div><div class="fl">Move</div></div>
<div class="key" style="left:143px;top:665px;width:64px;height:56px;border:1px solid #000;box-sizing:border-box;overflow:hidden;"><div class="fk">F3</div><div class="fl">Cycle Selected</div><div class="fl">Copy to Clip/Paste</div><div class="fl">Copy</div></div>
<div class="key" style="left:208px;top:665px;width:64px;height:56px;border:1px solid #000;box-sizing:border-box;overflow:hidden;"><div class="fk">F4</div><div class="fl">Popup Menu</div><div class="fl">Set Context</div><div class="fl">Set Context Up</div></div>
<div class="key" style="left:273px;top:665px;width:64px;height:56px;border:1px solid #000;box-sizing:border-box;overflow:hidden;"><div class="fk">F5</div><div class="fl">Add Cell</div><div class="fl">Add Property Text</div><div class="fl">Rotate -90</div></div>
<div class="key" style="left:338px;top:665px;width:64px;height:56px;border:1px solid #000;box-sizing:border-box;overflow:hidden;"><div class="fk">F6</div><div class="fl">Peek Area 1</div><div class="fl">Unpeek Area</div><div class="fl">Peek 1</div></div>
<div class="key" style="left:415px;top:665px;width:64px;height:56px;border:1px solid #000;box-sizing:border-box;overflow:hidden;"><div class="fk">F7</div><div class="fl">Sel/Move Text</div><div class="fl">Sel/Change Text</div><div class="fl">Activate Port</div></div>
<div class="key" style="left:480px;top:665px;width:64px;height:56px;border:1px solid #000;box-sizing:border-box;overflow:hidden;"><div class="fk">F8</div><div class="fl">View Area</div><div class="fl">View All</div><div class="fl">Activate Net</div></div>
<div class="key" style="left:545px;top:665px;width:64px;height:56px;border:1px solid #000;box-sizing:border-box;overflow:hidden;"><div class="fk">F9</div><div class="fl">Set Location Mode</div><div class="fl">Toggle Autonotch</div><div class="fl">Get Outline</div></div>
<div class="key" style="left:610px;top:665px;width:64px;height:56px;border:1px solid #000;box-sizing:border-box;overflow:hidden;"><div class="fk">F10</div><div class="fl">Pulldown Menu</div><div class="fl">Set IC Layer</div><div class="fl">Browse for File</div></div>
<div class="key" style="left:675px;top:665px;width:64px;height:56px;border:1px solid #000;box-sizing:border-box;overflow:hidden;"><div class="fk">F11</div><div class="fl">Read File</div><div class="fl">Edit File</div><div class="fl">Save Cell</div></div>
<div class="key" style="left:740px;top:665px;width:64px;height:56px;border:1px solid #000;box-sizing:border-box;overflow:hidden;"><div class="fk">F12</div><div class="fl">Pop Window</div><div class="fl">Close Window</div><div class="fl"></div></div>
<span class="t" style="left:407px;top:687.53px;font-size:10px;line-height:10px;font-weight:normal;color:#000;">s</span>
<span class="t" style="left:407px;top:698.53px;font-size:10px;line-height:10px;font-weight:normal;color:#000;">c</span>
<span class="t" style="left:407px;top:709.53px;font-size:10px;line-height:10px;font-weight:normal;color:#000;">a</span>
<div class="dk1" style="left:13px;top:721px;width:791px;height:1px;"></div>
<div class="lt" style="left:13px;top:722px;width:791px;height:2px;background-position:-1px 0px;"></div>
<span class="t" style="left:22.5px;top:729.18px;font-size:24px;line-height:24px;font-weight:bold;color:#000;font-family:'Liberation Mono',monospace;transform:scaleX(0.68);transform-origin:50% 50%;">i</span>
<span class="t" style="left:54px;top:730.84px;font-size:12px;line-height:12px;font-weight:bold;color:#000;letter-spacing:0.42px;">Shape ... layer 2 (METAL1.PORT) ... area is 12 ... perimeter is 14 ... part of port "G1" ... part of net "G1"</span>
<div class="dk" style="left:242px;top:656px;width:384px;height:8px;background-position:0px 0px;"></div>
<div class="dk" style="left:618px;top:170px;width:8px;height:486px;background-position:0px 0px;"></div>
<div style="left:234px;top:655px;width:384px;height:1px;background:#000;"></div>
<div style="left:234px;top:162px;width:384px;height:493px;background:#fff;"></div>
<div style="left:235px;top:163px;width:382px;height:491px;background:#d8d8bf;"></div>
<div style="left:248px;top:176px;width:357px;height:466px;border:1px solid #fff;box-sizing:border-box;"></div>
<div style="left:247px;top:175px;width:357px;height:466px;border:1px solid #000;box-sizing:border-box;"></div>
<span class="t" style="left:426px;top:188.15px;font-size:14px;line-height:14px;font-weight:bold;color:#000;letter-spacing:0.28px;transform:translateX(-50%);">Copy to Layer</span>
<div style="left:260px;top:207px;width:332px;height:1px;background:#000;"></div>
<div style="left:260px;top:208px;width:332px;height:1px;background:#fff;"></div>
<span class="t" style="left:268px;top:209.84px;font-size:12px;line-height:12px;font-weight:bold;color:#000;letter-spacing:0.11px;">Choose one layer name</span>
<div class="dk" style="left:265px;top:230px;width:309px;height:2px;background-position:-1px 0px;"></div>
<div class="dk" style="left:265px;top:230px;width:2px;height:305px;background-position:-1px 0px;"></div>
<div class="lt" style="left:267px;top:533px;width:307px;height:2px;background-position:-1px -1px;"></div>
<div class="lt" style="left:572px;top:232px;width:2px;height:303px;background-position:0px 0px;"></div>
<div style="left:277px;top:232px;width:31px;height:301px;background:#000;"></div>
<div style="left:267px;top:307px;width:289px;height:15px;background:#000;"></div>
<span class="t" style="left:323px;top:231.15px;font-size:14px;line-height:14px;font-weight:normal;color:#000;letter-spacing:-0.29px;">44</span>
<span class="t" style="left:362px;top:231.15px;font-size:14px;line-height:14px;font-weight:normal;color:#000;letter-spacing:-0.07px;">P_PLUS_SELECT</span>
<span class="t" style="left:323px;top:246.15px;font-size:14px;line-height:14px;font-weight:normal;color:#000;letter-spacing:-0.29px;">45</span>
<span class="t" style="left:362px;top:246.15px;font-size:14px;line-height:14px;font-weight:normal;color:#000;letter-spacing:-0.13px;">N_PLUS_SELECT</span>
<span class="t" style="left:323px;top:261.15px;font-size:14px;line-height:14px;font-weight:normal;color:#000;letter-spacing:-0.29px;">46</span>
<span class="t" style="left:362px;top:261.15px;font-size:14px;line-height:14px;font-weight:normal;color:#000;letter-spacing:0.17px;">POLY</span>
<span class="t" style="left:323px;top:276.15px;font-size:14px;line-height:14px;font-weight:normal;color:#000;letter-spacing:-0.29px;">47</span>
<span class="t" style="left:362px;top:276.15px;font-size:14px;line-height:14px;font-weight:normal;color:#000;letter-spacing:0.35px;">CONTACT_TO_POLY</span>
<span class="t" style="left:323px;top:291.15px;font-size:14px;line-height:14px;font-weight:normal;color:#000;letter-spacing:-0.29px;">48</span>
<span class="t" style="left:362px;top:291.15px;font-size:14px;line-height:14px;font-weight:normal;color:#000;letter-spacing:0.47px;">CONTACT_TO_ACTIVE</span>
<span class="t" style="left:323px;top:306.15px;font-size:14px;line-height:14px;font-weight:normal;color:#fff;letter-spacing:-0.29px;">49</span>
<span class="t" style="left:362px;top:306.15px;font-size:14px;line-height:14px;font-weight:normal;color:#fff;letter-spacing:0.43px;">METAL1</span>
<span class="t" style="left:323px;top:321.15px;font-size:14px;line-height:14px;font-weight:normal;color:#000;letter-spacing:-0.29px;">50</span>
<span class="t" style="left:362px;top:321.15px;font-size:14px;line-height:14px;font-weight:normal;color:#000;letter-spacing:1.14px;">VIA</span>
<span class="t" style="left:323px;top:336.15px;font-size:14px;line-height:14px;font-weight:normal;color:#000;letter-spacing:-0.29px;">51</span>
<span class="t" style="left:362px;top:336.15px;font-size:14px;line-height:14px;font-weight:normal;color:#000;letter-spacing:0.59px;">METAL2</span>
<span class="t" style="left:323px;top:351.15px;font-size:14px;line-height:14px;font-weight:normal;color:#000;letter-spacing:-0.29px;">52</span>
<span class="t" style="left:362px;top:351.15px;font-size:14px;line-height:14px;font-weight:normal;color:#000;letter-spacing:0.07px;">OVERGLASS</span>
<span class="t" style="left:323px;top:366.15px;font-size:14px;line-height:14px;font-weight:normal;color:#000;letter-spacing:-0.29px;">55</span>
<span class="t" style="left:362px;top:366.15px;font-size:14px;line-height:14px;font-weight:normal;color:#000;letter-spacing:0.1px;">CONTACT_TO_ELECTRODE</span>
<span class="t" style="left:323px;top:381.15px;font-size:14px;line-height:14px;font-weight:normal;color:#000;letter-spacing:-0.29px;">56</span>
<span class="t" style="left:362px;top:381.15px;font-size:14px;line-height:14px;font-weight:normal;color:#000;letter-spacing:-0.29px;">ELECTRODE</span>
<span class="t" style="left:323px;top:396.15px;font-size:14px;line-height:14px;font-weight:normal;color:#000;letter-spacing:-0.29px;">57</span>
<span class="t" style="left:362px;top:396.15px;font-size:14px;line-height:14px;font-weight:normal;color:#000;letter-spacing:-0.1px;">BURIED_CCD</span>
<span class="t" style="left:323px;top:411.15px;font-size:14px;line-height:14px;font-weight:normal;color:#000;letter-spacing:-0.29px;">58</span>
<span class="t" style="left:362px;top:411.15px;font-size:14px;line-height:14px;font-weight:normal;color:#000;letter-spacing:-0.14px;">PBASE</span>
<span class="t" style="left:323px;top:426.15px;font-size:14px;line-height:14px;font-weight:normal;color:#000;letter-spacing:-0.29px;">59</span>
<span class="t" style="left:362px;top:426.15px;font-size:14px;line-height:14px;font-weight:normal;color:#000;letter-spacing:0.41px;">CAP_WELL</span>
<span class="t" style="left:323px;top:441.15px;font-size:14px;line-height:14px;font-weight:normal;color:#000;letter-spacing:-0.29px;">60</span>
<span class="t" style="left:362px;top:441.15px;font-size:14px;line-height:14px;font-weight:normal;color:#000;letter-spacing:0.47px;">Thick_Active</span>
<span class="t" style="left:323px;top:456.15px;font-size:14px;line-height:14px;font-weight:normal;color:#000;letter-spacing:-0.29px;">61</span>
<span class="t" style="left:362px;top:456.15px;font-size:14px;line-height:14px;font-weight:normal;color:#000;letter-spacing:1.16px;">VIA2</span>
<span class="t" style="left:323px;top:471.15px;font-size:14px;line-height:14px;font-weight:normal;color:#000;letter-spacing:-0.29px;">62</span>
<span class="t" style="left:362px;top:471.15px;font-size:14px;line-height:14px;font-weight:normal;color:#000;letter-spacing:0.76px;">METAL3</span>
<span class="t" style="left:323px;top:486.15px;font-size:14px;line-height:14px;font-weight:normal;color:#000;letter-spacing:0.57px;">111</span>
<span class="t" style="left:362px;top:486.15px;font-size:14px;line-height:14px;font-weight:normal;color:#000;letter-spacing:0.05px;">DIFFUSED_RESISTOR</span>
<span class="t" style="left:323px;top:501.15px;font-size:14px;line-height:14px;font-weight:normal;color:#000;letter-spacing:-0.12px;">149</span>
<span class="t" style="left:362px;top:501.15px;font-size:14px;line-height:14px;font-weight:normal;color:#000;letter-spacing:0.59px;">METAL1_BLKG</span>
<span class="t" style="left:323px;top:516.15px;font-size:14px;line-height:14px;font-weight:normal;color:#000;letter-spacing:-0.12px;">151</span>
<span class="t" style="left:362px;top:516.15px;font-size:14px;line-height:14px;font-weight:normal;color:#000;letter-spacing:0.59px;">METAL2_BLKG</span>
<svg class="a" style="left:0;top:0" width="818" height="768"><defs><pattern id="dt" width="2" height="2" patternUnits="userSpaceOnUse"><rect width="1" height="1" fill="#200000"/><rect x="1" y="1" width="1" height="1" fill="#200000"/></pattern><pattern id="dk2" width="2" height="2" patternUnits="userSpaceOnUse"><rect width="1" height="1" fill="#000"/><rect x="1" y="1" width="1" height="1" fill="#000"/></pattern></defs><rect x="281.25" y="236.25" width="22.5" height="7.5" fill="#000" stroke="#f8f840" stroke-width="2.5"/><rect x="281.25" y="251.25" width="22.5" height="7.5" fill="#081808" stroke="#88f020" stroke-width="2.5"/><rect x="280" y="265" width="25" height="10" fill="#cc2828"/><rect x="281" y="266" width="23" height="8" fill="url(#dt)"/><rect x="280" y="280" width="25" height="10" fill="#fff"/><rect x="283" y="283" width="19" height="4" fill="#ee1010"/><rect x="280" y="295" width="25" height="10" fill="#fff"/><rect x="283" y="298" width="19" height="4" fill="#10ee10"/><rect x="281" y="311" width="23" height="8" fill="#000" stroke="#0000ee" stroke-width="2"/><path d="M286 318l6 -6M294 318l6 -6" stroke="#2020c0" stroke-width="1"/><rect x="280" y="325" width="25" height="10" fill="#fff"/><rect x="283" y="328" width="19" height="4" fill="#0000ee"/><rect x="281" y="341" width="23" height="8" fill="#000" stroke="#a040d0" stroke-width="2"/><path d="M284 342l7 6M290 342l7 6M296 342l7 6" stroke="#a040d0" stroke-width="1.2"/><rect x="280.5" y="355.5" width="24" height="9" fill="#000" stroke="#fff" stroke-width="1"/><rect x="285" y="356" width="1" height="1" fill="#fff"/><rect x="293" y="356" width="1" height="1" fill="#fff"/><rect x="301" y="356" width="1" height="1" fill="#fff"/><rect x="285" y="363" width="1" height="1" fill="#fff"/><rect x="293" y="363" width="1" height="1" fill="#fff"/><rect x="301" y="363" width="1" height="1" fill="#fff"/><rect x="281" y="359" width="1" height="2" fill="#fff"/><rect x="289" y="359" width="1" height="2" fill="#fff"/><rect x="297" y="359" width="1" height="2" fill="#fff"/><rect x="280" y="370" width="25" height="10" fill="#5f9f9f"/><rect x="280.5" y="385.5" width="24" height="9" fill="#000" stroke="#c8c8f0" stroke-width="1"/><path d="M283 386l8 8M290 386l8 8M297 386l7 7" stroke="#c8c8f0" stroke-width="1"/><rect x="280.5" y="400.5" width="24" height="9" fill="#000" stroke="#fff" stroke-width="1"/><rect x="280.5" y="415.5" width="24" height="9" fill="#000" stroke="#fff" stroke-width="1"/><rect x="280.5" y="430.5" width="24" height="9" fill="#000" stroke="#fff" stroke-width="1"/><rect x="280" y="445" width="25" height="10" fill="#9f9f5f"/><rect x="283" y="448" width="19" height="4" fill="url(#dk2)"/><rect x="280" y="460" width="25" height="10" fill="#fff"/><rect x="283" y="463" width="19" height="4" fill="#9370db"/><rect x="281" y="476" width="23" height="8" fill="#000" stroke="#848484" stroke-width="2"/><path d="M283.5 477v6M291.5 477v6M299.5 477v6" stroke="#848484" stroke-width="1"/><rect x="280.5" y="490.5" width="24" height="9" fill="#000" stroke="#fff" stroke-width="1"/><rect x="280.5" y="505.5" width="24" height="9" fill="#000" stroke="#1818b0" stroke-width="1"/><rect x="280.5" y="520.5" width="24" height="9" fill="#000" stroke="#8040a8" stroke-width="1"/></svg>
<div class="dk" style="left:556px;top:232px;width:2px;height:301px;background-position:0px 0px;"></div>
<div class="dk" style="left:556px;top:232px;width:16px;height:2px;background-position:0px 0px;"></div>
<div class="lt" style="left:570px;top:234px;width:2px;height:299px;background-position:0px 0px;"></div>
<div class="lt" style="left:558px;top:531px;width:14px;height:2px;background-position:0px -1px;"></div>
<svg class="a" style="left:559px;top:236px" width="11" height="11" viewBox="0 0 11 11"><path d="M5.5 0.5L0.5 10.5" stroke="#fff" stroke-width="1.6"/><path d="M5.5 0.5L10.5 10H0.5" stroke="#000" stroke-width="1.8" fill="none"/></svg>
<svg class="a" style="left:559px;top:518px" width="11" height="11" viewBox="0 0 11 11"><path d="M10.5 1H0.5L5.5 10.5" stroke="#fff" stroke-width="1.8" fill="none"/><path d="M10.5 0.5L5.5 10.5" stroke="#000" stroke-width="1.6"/></svg>
<div class="lt" style="left:558px;top:293px;width:12px;height:2px;background-position:0px -1px;"></div>
<div class="lt" style="left:558px;top:293px;width:2px;height:38px;background-position:0px -1px;"></div>
<div class="dk" style="left:568px;top:293px;width:2px;height:38px;background-position:0px -1px;"></div>
<div class="dk" style="left:558px;top:329px;width:12px;height:2px;background-position:0px -1px;"></div>
<div style="left:260px;top:541px;width:327px;height:1px;background:#000;"></div>
<div style="left:260px;top:542px;width:327px;height:1px;background:#fff;"></div>
<span class="t" style="left:304px;top:554.84px;font-size:12px;line-height:12px;font-weight:bold;color:#000;letter-spacing:0.35px;">Or Type In</span>
<div style="left:372px;top:549px;width:171px;height:20px;background:#fff;"></div>
<div style="left:372px;top:549px;width:171px;height:2px;background:#d8d8bf;"></div>
<div style="left:372px;top:549px;width:2px;height:20px;background:#d8d8bf;"></div>
<div class="dk" style="left:372px;top:549px;width:171px;height:2px;background-position:0px -1px;"></div>
<div class="dk" style="left:372px;top:549px;width:2px;height:20px;background-position:0px -1px;"></div>
<span class="t" style="left:377px;top:552.15px;font-size:14px;line-height:14px;font-weight:normal;color:#000;letter-spacing:0.43px;">METAL1</span>
<div style="left:260px;top:582px;width:332px;height:1px;background:#000;"></div>
<div style="left:260px;top:583px;width:332px;height:1px;background:#fff;"></div>
<div style="left:310px;top:590px;width:66px;height:29px;border:1px dotted;border-color:#000 #fff #fff #000;box-sizing:border-box;"></div>
<div style="left:314px;top:594px;width:58px;height:21px;border:1px dotted;border-color:#fff #000 #000 #fff;box-sizing:border-box;"></div>
<div style="left:315px;top:595px;width:56px;height:19px;border:1px dotted;border-color:#fff #000 #000 #fff;box-sizing:border-box;"></div>
<span class="t" style="left:343.0px;top:597.84px;font-size:12px;line-height:12px;font-weight:bold;color:#000;letter-spacing:0.5px;transform:translateX(-50%);">OK</span>
<div style="left:394px;top:594px;width:58px;height:21px;border:1px dotted;border-color:#fff #000 #000 #fff;box-sizing:border-box;"></div>
<div style="left:395px;top:595px;width:56px;height:19px;border:1px dotted;border-color:#fff #000 #000 #fff;box-sizing:border-box;"></div>
<span class="t" style="left:423.0px;top:597.84px;font-size:12px;line-height:12px;font-weight:bold;color:#000;letter-spacing:0.26px;transform:translateX(-50%);">Reset</span>
<div style="left:475px;top:594px;width:57px;height:21px;border:1px dotted;border-color:#fff #000 #000 #fff;box-sizing:border-box;"></div>
<div style="left:476px;top:595px;width:55px;height:19px;border:1px dotted;border-color:#fff #000 #000 #fff;box-sizing:border-box;"></div>
<span class="t" style="left:503.5px;top:597.84px;font-size:12px;line-height:12px;font-weight:bold;color:#000;letter-spacing:-0.31px;transform:translateX(-50%);">Cancel</span>
<svg class="a" style="left:0;top:0" width="818" height="768"><ellipse cx="358" cy="315" rx="91" ry="11" fill="none" stroke="#d83030" stroke-width="1"/><ellipse cx="339" cy="602.3" rx="53.2" ry="25.5" fill="none" stroke="#d83030" stroke-width="1"/><rect x="305.5" y="585.5" width="75" height="37.5" fill="none" stroke="#d83030" stroke-width="1"/></svg>
</div></body></html>
